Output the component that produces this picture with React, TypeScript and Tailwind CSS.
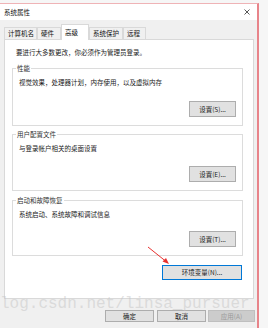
import React from 'react';

const cjk = "font-['Microsoft_YaHei','Noto_Sans_CJK_SC',sans-serif]";

function Btn({ label, className }: { label: string; className: string }) {
  return (
    <div className={`flex items-center justify-center text-[6.5px] leading-none text-[#1a1a1a] ${className}`}>
      {label}
    </div>
  );
}

function Group({ title, text, button, height }: { title: string; text: string; button: string; height: string }) {
  return (
    <div className={`relative ml-[7px] flex w-[231px] flex-col border border-[#dcdcdc] ${height}`}>
      {/* legend over the border */}
      <span className="absolute left-[3px] top-[-5px] bg-white px-[1px] text-[6.5px] leading-[9px] text-[#333]">{title}</span>
      <div className="mt-[9px] pl-[6px] text-[6.5px] leading-[9px] text-[#1a1a1a]">{text}</div>
      <Btn
        label={button}
        className="mt-auto mb-[8px] mr-[6px] h-[16px] w-[47px] self-end border border-[#adadad] bg-[#e1e1e1]"
      />
    </div>
  );
}

export default function App() {
  const tabs = [
    { name: '计算机名', w: 'w-[33px]' },
    { name: '硬件', w: 'w-[24px]' },
    { name: '高级', w: 'w-[28px]', active: true },
    { name: '系统保护', w: 'w-[34px]' },
    { name: '远程', w: 'w-[23px]' },
  ];

  return (
    <div className={`relative h-[328px] w-[268px] overflow-hidden bg-[#f6f6f6] pt-[3px] ${cjk}`}>
      <div className="h-[330px] w-[259px] border-t border-r-2 border-t-[#efb3b6] border-r-[#e8848a] bg-[#f0f0f0]">
        {/* Title bar */}
        <div className="flex h-[16px] items-center justify-between bg-white pl-[4px] pr-[6px]">
          <span className="text-[6.5px] leading-none text-[#111]">系统属性</span>
          <svg width="6" height="6" viewBox="0 0 6 6" className="mr-[1px]">
            <path d="M0.5 0.5L5.5 5.5M5.5 0.5L0.5 5.5" stroke="#444" strokeWidth="0.9" />
          </svg>
        </div>

        {/* Tabs */}
        <div className="mt-[4px] flex h-[15px] items-end pl-[4px]">
          {tabs.map((t) =>
            t.active ? (
              <div
                key={t.name}
                className={`relative z-10 -mb-px flex h-[16px] items-center border border-b-0 border-[#d9d9d9] bg-white pl-[3px] text-[6.5px] leading-none text-[#111] ${t.w}`}
              >
                {t.name}
              </div>
            ) : (
              <div
                key={t.name}
                className={`flex h-[12px] items-center border border-b-0 border-[#d9d9d9] bg-[#f0f0f0] pl-[3px] text-[6.5px] leading-none text-[#111] ${t.w}`}
              >
                {t.name}
              </div>
            )
          )}
        </div>

        {/* Panel */}
        <div className="ml-[4px] flex h-[260px] w-[250px] flex-col border border-[#d9d9d9] bg-white">
          <div className="mt-[8px] pl-[11px] text-[6.5px] leading-[9px] text-[#1a1a1a]">
            要进行大多数更改，你必须作为管理员登录。
          </div>
          <div className="mt-[11px]">
            <Group title="性能" text="视觉效果，处理器计划，内存使用，以及虚拟内存" button="设置(S)..." height="h-[58px]" />
          </div>
          <div className="mt-[8px]">
            <Group title="用户配置文件" text="与登录帐户相关的桌面设置" button="设置(E)..." height="h-[57px]" />
          </div>
          <div className="mt-[9px]">
            <Group title="启动和故障恢复" text="系统启动、系统故障和调试信息" button="设置(T)..." height="h-[56px]" />
          </div>
          <Btn
            label="环境变量(N)..."
            className="ml-[157px] mt-[9px] h-[15px] w-[80px] border border-[#0078d7] bg-[#e1e1e1]"
          />
        </div>

        {/* Dialog buttons */}
        <div className="mt-[11px] flex pl-[105px]">
          <Btn label="确定" className="h-[12px] w-[49px] border border-[#adadad] bg-[#e1e1e1]" />
          <Btn label="取消" className="ml-[3px] h-[12px] w-[49px] border border-[#adadad] bg-[#e1e1e1]" />
          <Btn label="应用(A)" className="ml-[2px] h-[12px] w-[47px] border border-[#bfbfbf] bg-[#cccccc] !text-[#9a9a9a]" />
        </div>
      </div>

      {/* Red annotation arrow */}
      <svg className="pointer-events-none absolute left-[140px] top-[240px]" width="40" height="30" viewBox="0 0 40 30">
        <path d="M8 7L25.5 21" stroke="#e8312f" strokeWidth="1" />
        <path d="M29 24L22.5 21.5L26 18Z" fill="#e8312f" />
      </svg>

      {/* Watermark */}
      <div className="pointer-events-none absolute left-[0px] top-[296px] whitespace-nowrap font-['Liberation_Mono',monospace] text-[16px] leading-[16px] text-[#c4c4c4]/50">
        log.csdn.net/linsa_pursuer
      </div>
    </div>
  );
}
